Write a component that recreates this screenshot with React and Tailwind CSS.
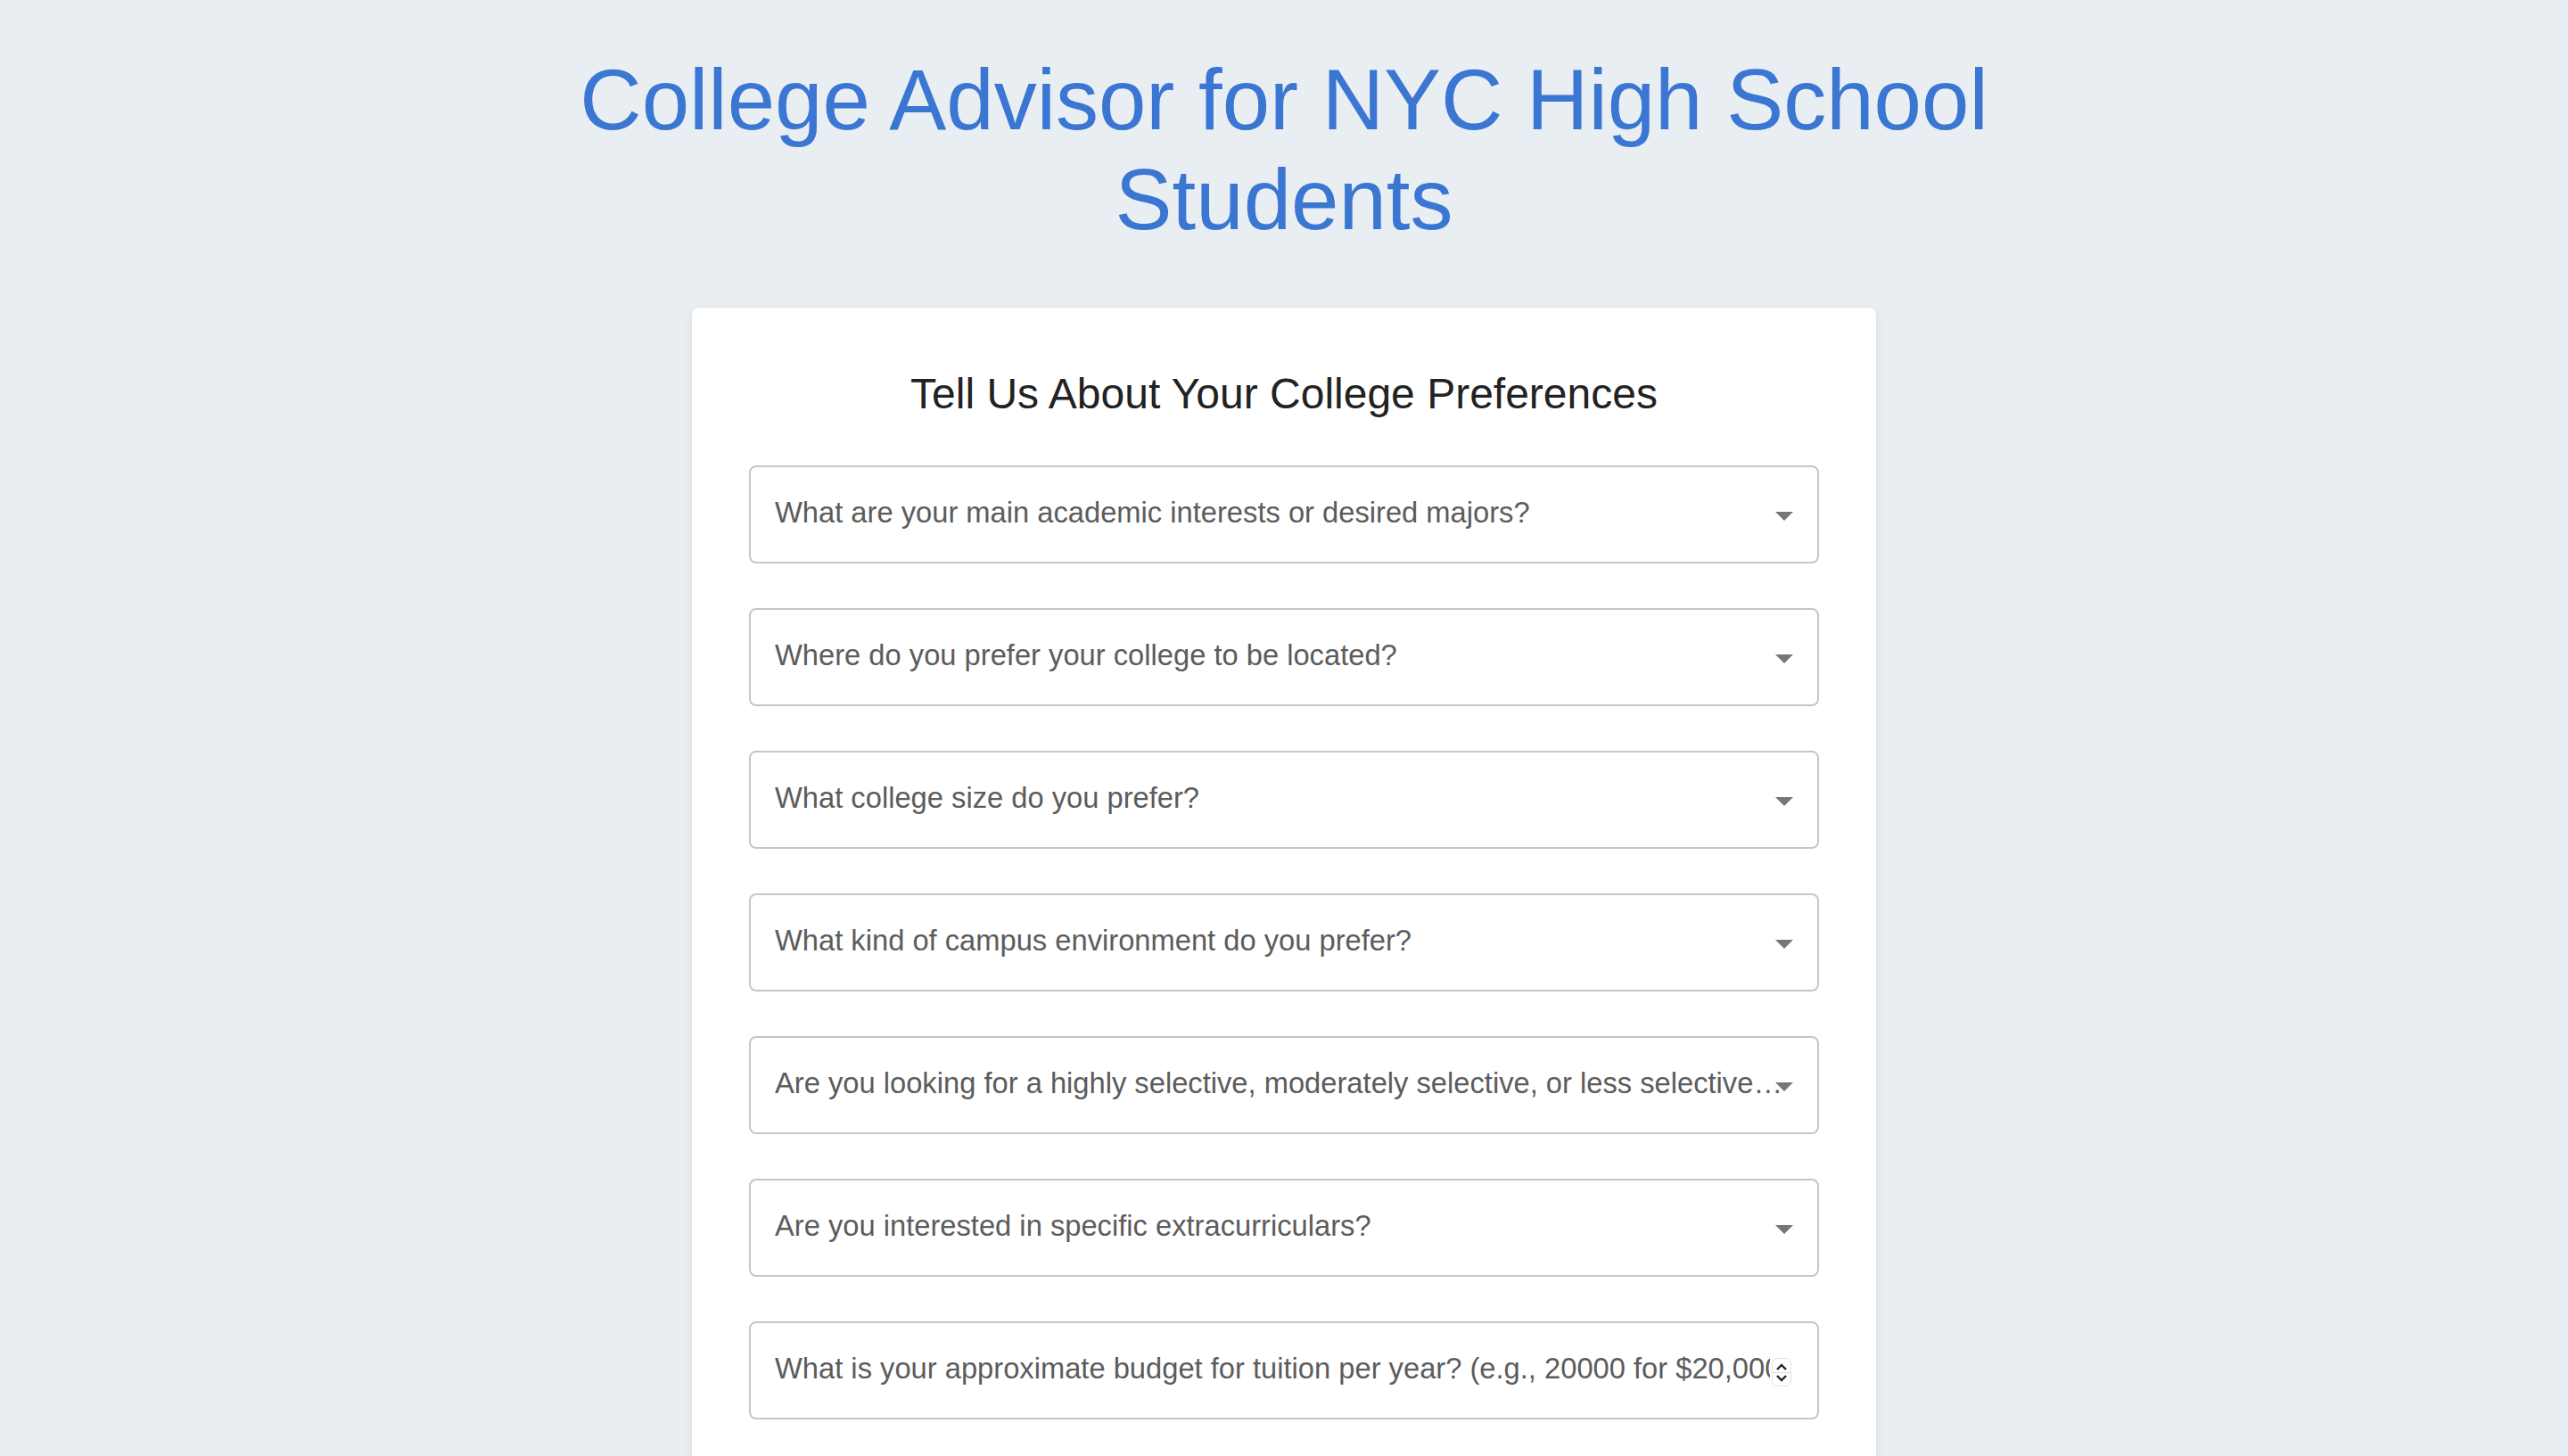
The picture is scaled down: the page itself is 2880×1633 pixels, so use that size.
import React from "react";

const questions = [
  "What are your main academic interests or desired majors?",
  "Where do you prefer your college to be located?",
  "What college size do you prefer?",
  "What kind of campus environment do you prefer?",
  "Are you looking for a highly selective, moderately selective, or less selective college?",
  "Are you interested in specific extracurriculars?",
];

function Arrow() {
  return (
    <svg width="20" height="10" viewBox="0 0 20 10" className="absolute right-[27px] top-1/2 -translate-y-1/2 mt-[2px]">
      <polygon points="0,0 20,0 10,10" fill="#767676" />
    </svg>
  );
}

function SelectBox({ label }) {
  return (
    <div className="relative flex items-center h-[110px] border-2 border-[#c6c6c6] rounded-[8px] bg-white pl-[27px] pr-[34px] pb-[4px]">
      <span className="block truncate text-[32.7px] text-[#5c5c5c]">{label}</span>
      <Arrow />
    </div>
  );
}

function NumberBox({ label }) {
  return (
    <div className="relative flex items-center h-[110px] border-2 border-[#c6c6c6] rounded-[8px] bg-white pl-[27px] pr-[53px] pb-[4px]">
      <span className="block overflow-hidden whitespace-nowrap text-[32.7px] text-[#5c5c5c]">{label}</span>
      <div className="absolute right-[29px] top-1/2 -translate-y-1/2 mt-[2px] w-[22px] h-[32px] rounded-[6px] border border-[#e2e2e2] bg-white flex flex-col items-center justify-center">
        <svg width="14" height="9" viewBox="0 0 14 9">
          <polyline points="2,7 7,2 12,7" fill="none" stroke="#222" strokeWidth="2.4" />
        </svg>
        <div className="w-full h-[1px] bg-[#d8d8d8] my-[1px]" />
        <svg width="14" height="9" viewBox="0 0 14 9">
          <polyline points="2,2 7,7 12,2" fill="none" stroke="#222" strokeWidth="2.4" />
        </svg>
      </div>
    </div>
  );
}

export default function App() {
  return (
    <div className="min-h-screen bg-[#e9eef3] font-['Liberation_Sans',Arial,sans-serif] pt-[56px] pb-[80px]">
      <h1 className="mx-auto max-w-[1700px] text-center text-[96px] leading-[112px] font-normal text-[#3a76d2]">
        College Advisor for NYC High School Students
      </h1>
      <div className="mx-auto mt-[65px] w-[1328px] bg-white rounded-[8px] shadow-[0_2px_10px_rgba(0,0,0,0.08)] px-[64px] pt-[69px] pb-[64px]">
        <h2 className="text-center text-[48px] leading-[56px] font-normal text-[#222222] mb-[52px]">
          Tell Us About Your College Preferences
        </h2>
        <div className="flex flex-col gap-[50px]">
          {questions.map((q) => (
            <SelectBox key={q} label={q} />
          ))}
          <NumberBox label="What is your approximate budget for tuition per year? (e.g., 20000 for $20,000)" />
          <button className="h-[100px] rounded-[8px] bg-[#3a76d2] text-white text-[32px]">
            Get College Recommendations
          </button>
        </div>
      </div>
    </div>
  );
}
